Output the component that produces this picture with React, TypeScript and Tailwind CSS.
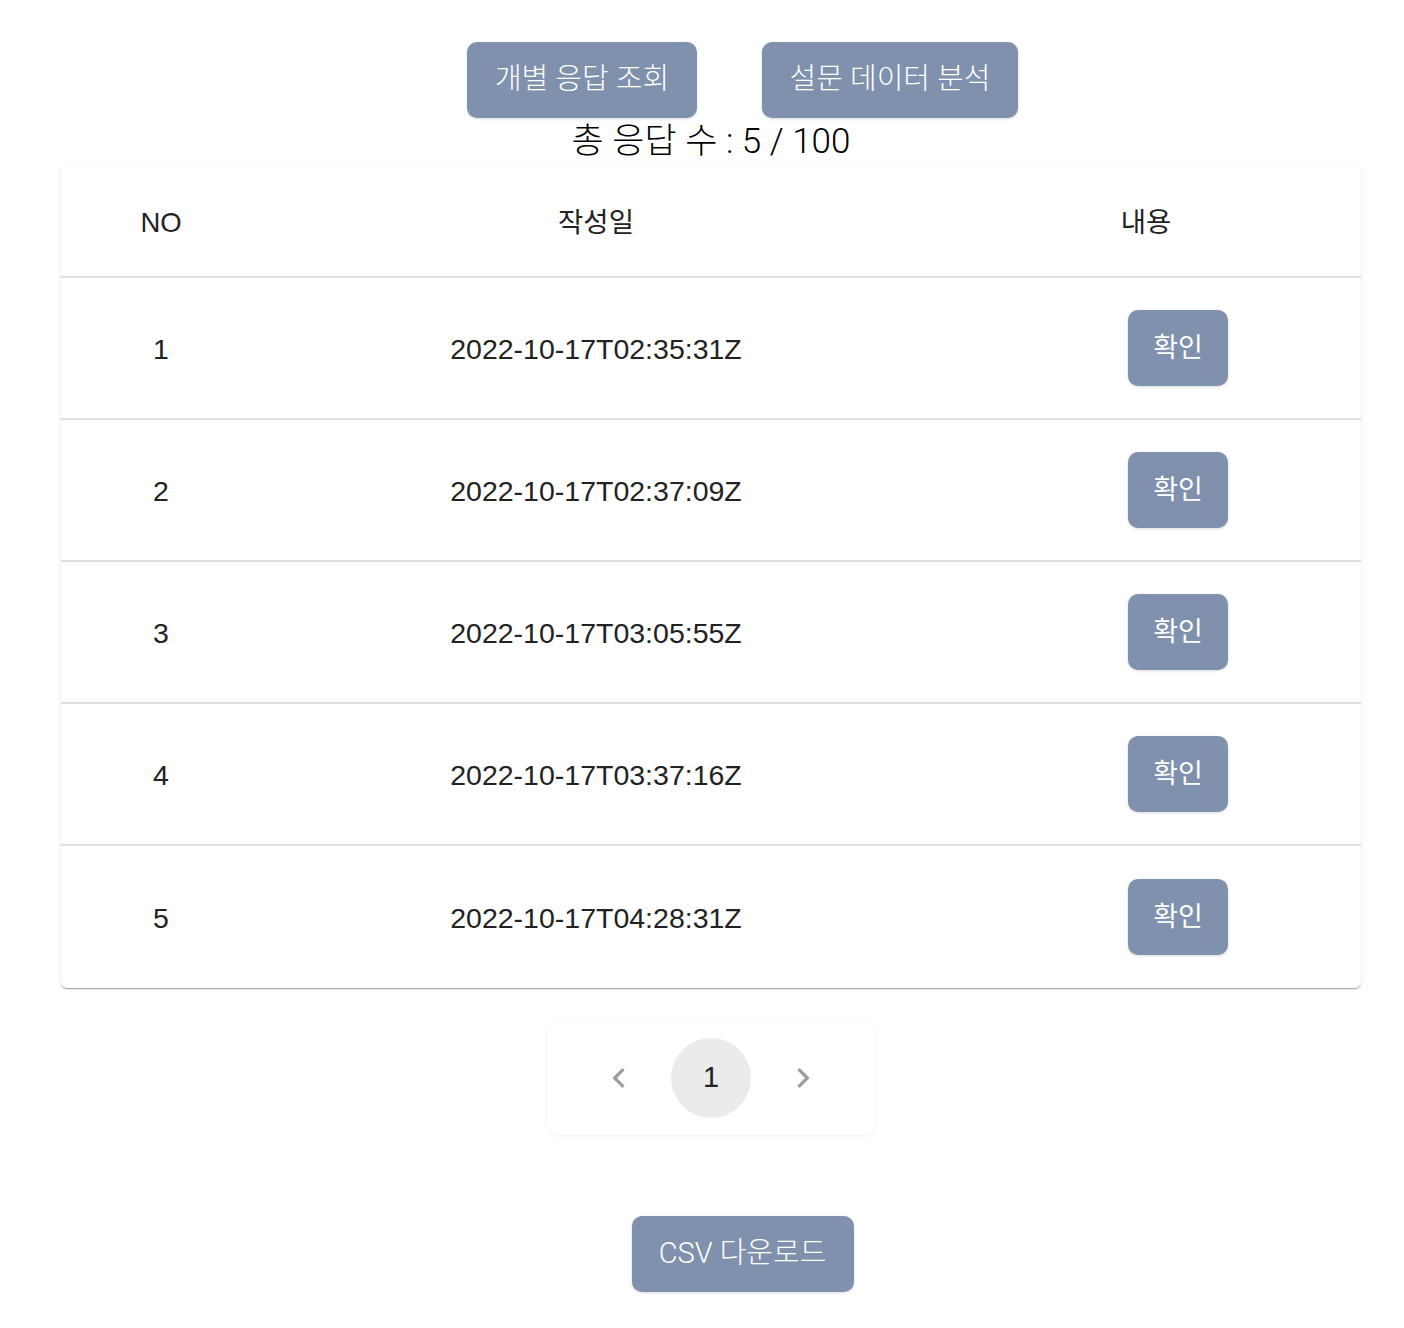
import React from "react";

const rows = [
  { no: 1, date: "2022-10-17T02:35:31Z" },
  { no: 2, date: "2022-10-17T02:37:09Z" },
  { no: 3, date: "2022-10-17T03:05:55Z" },
  { no: 4, date: "2022-10-17T03:37:16Z" },
  { no: 5, date: "2022-10-17T04:28:31Z" },
];

const kfont = { fontFamily: "Roboto, 'Noto Sans CJK KR', sans-serif" };
const tfont = { fontFamily: "'Liberation Sans', 'Noto Sans CJK KR', sans-serif" };

export default function App() {
  return (
    <div className="w-[1404px] min-h-[1328px] bg-white flex flex-col items-center pl-[18px]">
      <div className="flex gap-[65px] pt-[42px] ml-[63px]" style={kfont}>
        <button className="w-[230px] h-[76px] rounded-[10px] bg-[#7f91ad] text-white text-[29px] font-light shadow-[0_1px_3px_rgba(0,0,0,0.15)]">
          개별 응답 조회
        </button>
        <button className="w-[256px] h-[76px] rounded-[10px] bg-[#7f91ad] text-white text-[29px] font-light shadow-[0_1px_3px_rgba(0,0,0,0.15)]">
          설문 데이터 분석
        </button>
      </div>
      <div className="h-[46px] flex items-center text-[35px] font-light text-black leading-none" style={kfont}>
        총 응답 수 : 5 / 100
      </div>
      <div
        className="w-[1300px] mt-[2px] bg-white rounded-[6px] shadow-[0_2px_1px_-1px_rgba(0,0,0,0.2),0_1px_1px_0_rgba(0,0,0,0.14),0_1px_3px_0_rgba(0,0,0,0.12)] text-[#222]"
        style={tfont}
      >
        <div className="grid grid-cols-[200px_670px_1fr] h-[112px] items-center pt-[3px] text-[27.5px] border-b-2 border-[#e0e0e0]">
          <div className="text-center">NO</div>
          <div className="text-center">작성일</div>
          <div className="text-center">내용</div>
        </div>
        {rows.map((r, i) => (
          <div
            key={r.no}
            className={`grid grid-cols-[200px_670px_1fr] h-[142px] items-center text-[28.5px] ${
              i < rows.length - 1 ? "border-b-2 border-[#e0e0e0]" : ""
            }`}
          >
            <div className="text-center pt-[3px]">{r.no}</div>
            <div className="text-center pt-[3px]">{r.date}</div>
            <div className="pl-[197px]">
              <button
                className="w-[100px] h-[76px] rounded-[10px] bg-[#7f91ad] text-white text-[27px] shadow-[0_1px_3px_rgba(0,0,0,0.15)]"
                style={tfont}
              >
                확인
              </button>
            </div>
          </div>
        ))}
      </div>
      <div className="mt-[32px] w-[328px] h-[115px] rounded-[12px] bg-white shadow-[0_1px_4px_rgba(0,0,0,0.06)] flex items-center justify-center gap-[32px]">
        <svg width="40" height="40" viewBox="0 0 24 24" className="text-[#9e9e9e]">
          <path d="M15.41 7.41 14 6l-6 6 6 6 1.41-1.41L10.83 12z" fill="currentColor" />
        </svg>
        <div
          className="w-[80px] h-[80px] rounded-full bg-[#ebebeb] flex items-center justify-center text-[29px] text-[#222]"
          style={tfont}
        >
          1
        </div>
        <svg width="40" height="40" viewBox="0 0 24 24" className="text-[#9e9e9e]">
          <path d="M10 6 8.59 7.41 13.17 12l-4.58 4.59L10 18l6-6z" fill="currentColor" />
        </svg>
      </div>
      <button
        className="mt-[81px] ml-[63px] w-[222px] h-[76px] rounded-[10px] bg-[#7f91ad] text-white text-[29px] font-light shadow-[0_1px_3px_rgba(0,0,0,0.15)]"
        style={kfont}
      >
        CSV 다운로드
      </button>
    </div>
  );
}
